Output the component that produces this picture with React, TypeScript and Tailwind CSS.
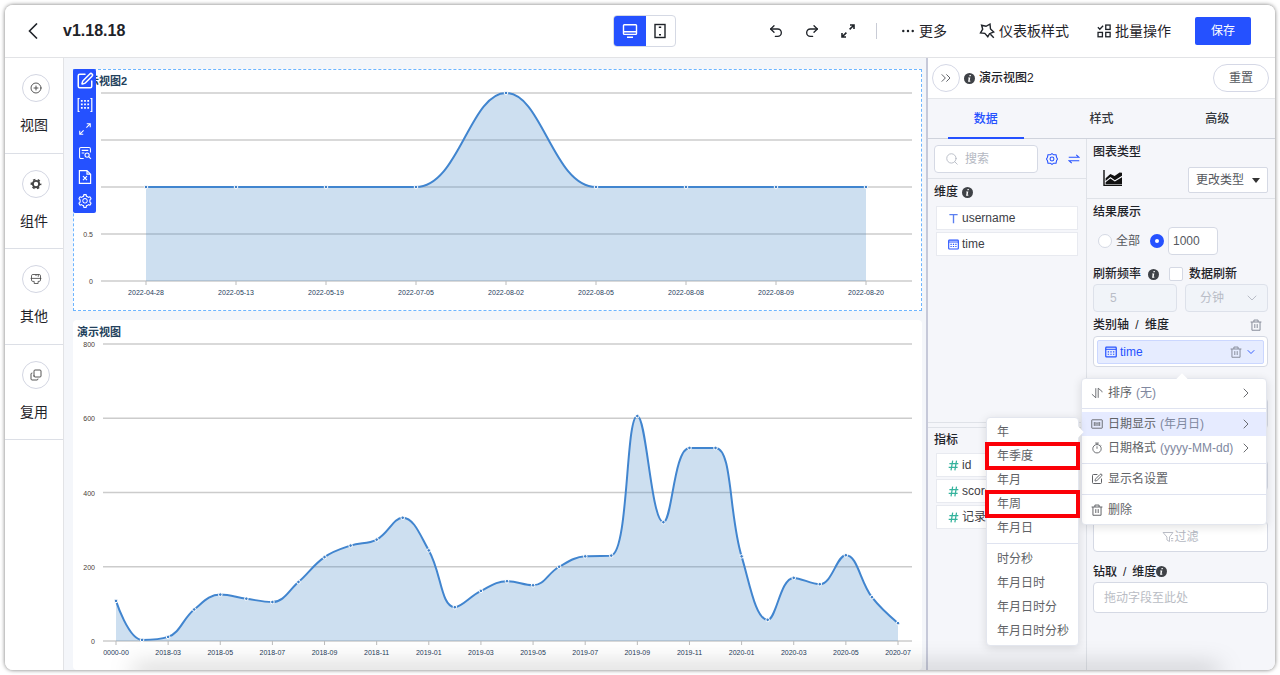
import { useState } from "react";
import type { ReactNode, SVGProps } from "react";
import {
  ChevronDown,
  ChevronRight,
  ChevronsRight,
  CirclePlus,
  Copy,
  Redo2,
  Search,
  SquarePen,
  Undo2,
} from "lucide-react";
import { AiOutlineSetting } from "react-icons/ai";
import clsx from "clsx";

type IconProps = SVGProps<SVGSVGElement>;

function Svg({ children, ...props }: IconProps) {
  return (
    <svg
      viewBox="0 0 16 16"
      fill="none"
      stroke="currentColor"
      strokeWidth="1.2"
      aria-hidden="true"
      {...props}
    >
      {children}
    </svg>
  );
}

const BackIcon = (p: IconProps) => (
  <Svg strokeWidth="1.6" {...p}>
    <path d="M12 0.5 4.5 8l7.5 7.5" />
  </Svg>
);

const DesktopIcon = (p: IconProps) => (
  <Svg strokeWidth="1.4" {...p}>
    <rect x="1.5" y="1.8" width="13" height="9.6" rx="0.8" />
    <path d="M1.5 8.8h13M5 14.2h6" />
  </Svg>
);

const PhoneIcon = (p: IconProps) => (
  <Svg strokeWidth="1.4" {...p}>
    <rect x="3" y="1.5" width="10" height="13" />
    <path d="M6.8 4.2h2.4M7 11.8h2" />
  </Svg>
);

const StyleIcon = (p: IconProps) => (
  <Svg strokeWidth="1.4" {...p}>
    <path d="M2.6 2.2 7 3.3 11 1.2l.5 4.8 3.2 3-4.2 1.7-1.7 3.1-3-3.4-4.3-.5 2.2-3.7z" />
    <path d="m11.4 11.2 3.4 3.6" />
  </Svg>
);

const BatchIcon = (p: IconProps) => (
  <Svg strokeWidth="1.5" {...p}>
    <path d="m1 3.8 2.2 2.2L7 2" />
    <rect x="10" y="1.2" width="5" height="5" />
    <rect x="1.2" y="9.6" width="5" height="5" />
    <rect x="10" y="9.6" width="5" height="5" />
  </Svg>
);

const ComponentIcon = (p: IconProps) => (
  <Svg {...p}>
    <circle cx="8" cy="8" r="4.2" strokeWidth="2.6" />
    <circle
      cx="8"
      cy="8"
      r="6.2"
      strokeWidth="2"
      strokeDasharray="3.2 3.293"
      strokeDashoffset="1.6"
    />
  </Svg>
);

const OtherIcon = (p: IconProps) => (
  <Svg strokeWidth="1.1" {...p}>
    <path d="M2 7.2V3.6C2 2.6 2.8 2 3.8 2h8.4c1 0 1.8.6 1.8 1.6v6c0 1-.8 1.6-1.8 1.6h-1.4V14H5.6v-2.8H3.8c-1 0-1.8-.6-1.8-1.6z" />
    <path d="M.8 7.2h14.4M8 2v2M11 2v3" />
  </Svg>
);

const GridIcon = (p: IconProps) => (
  <Svg {...p}>
    <path d="M2.6 1.5H1.2v13h1.4M13.4 1.5h1.4v13h-1.4" />
    <path strokeWidth="1.8" strokeDasharray="1.8 1.7" d="M4.8 3v10M8 3v10M11.2 3v10" />
  </Svg>
);

const ArrowsIcon = (p: IconProps) => (
  <Svg {...p}>
    <path d="M10 2h4v4M13.8 2.2 9.6 6.4M6 14H2v-4M2.2 13.8l4.2-4.2" />
  </Svg>
);

const DetailIcon = (p: IconProps) => (
  <Svg {...p}>
    <path d="M6.5 14.2H3.4c-1 0-1.6-.6-1.6-1.6V3.4c0-1 .6-1.6 1.6-1.6h9.2c1 0 1.6.6 1.6 1.6v4M4.2 5h7.6M4.2 8h3" />
    <circle cx="10.4" cy="10.4" r="2.4" />
    <path d="m12.2 12.2 2.6 2.6" />
  </Svg>
);

const FileCloseIcon = (p: IconProps) => (
  <Svg {...p}>
    <path d="M10 1.6H2.4v12.8h11.2V5.2zM10 1.6v3.6h3.6" />
    <path d="m6 7.2 4 4M10 7.2l-4 4" />
  </Svg>
);

const InfoIcon = (p: IconProps) => (
  <Svg stroke="none" {...p}>
    <circle cx="8" cy="8" r="8" fill="#3f4247" />
    <path d="M8.1 2.8h2l-.4 2h-2zM6.2 6.4h3l-1 5h1.2l-.3 1.4H5.9l.9-5H5.9z" fill="#fff" />
  </Svg>
);

const DateIcon = (p: IconProps) => (
  <Svg strokeWidth="1.6" {...p}>
    <rect x="1" y="1.6" width="14" height="13" rx="1" />
    <path d="M1 4.4h14" strokeWidth="1.4" />
    <path d="M3.6 7.8h8.8M3.6 11h8.8" strokeDasharray="1.8 1.7" />
  </Svg>
);

const TextIcon = (p: IconProps) => (
  <Svg strokeWidth="2" {...p}>
    <path d="M2 2.4h12M8 2.4v12.4" />
  </Svg>
);

const NumberIcon = (p: IconProps) => (
  <Svg strokeWidth="1.8" {...p}>
    <path d="M6.8 1 4.4 15M12.4 1 10 15M2 5.2h13M1 10.8h13" />
  </Svg>
);

const HexGearIcon = (p: IconProps) => (
  <Svg strokeWidth="1.4" {...p}>
    <path d="M8 .8l2.2 1.6h3.2l.6 3.2L15.4 8 14 10.4l-.6 3.2h-3.2L8 15.2l-2.2-1.6H2.6L2 10.4.6 8 2 5.6l.6-3.2h3.2z" />
    <circle cx="8" cy="8" r="2.6" />
  </Svg>
);

const SwapIcon = (p: IconProps) => (
  <Svg strokeWidth="1.5" {...p}>
    <path d="M1 5.6h13.4L11 2.4M15 10.4H1.6L5 13.6" />
  </Svg>
);

const AreaIcon = (p: IconProps) => (
  <Svg viewBox="0 0 20 18" stroke="none" {...p}>
    <path d="M1 1v15.4h18" fill="none" stroke="#111" strokeWidth="1.4" />
    <path d="M2.6 9.2 7.4 5l4.2 2 5-3.6 2.4.4v3l-7.2 4.4L7.4 8l-4.8 4z" fill="#111" />
    <path d="m2.6 13.2 4.8-3.8 4.4 3 7.2-4.2v7H2.6z" fill="#111" />
  </Svg>
);

const SortIcon = (p: IconProps) => (
  <Svg {...p}>
    <path d="M6.4 1.6v12.8L1.2 9.6M9.6 14.4V1.6L14.8 6v1" />
  </Svg>
);

const DateShowIcon = (p: IconProps) => (
  <Svg {...p}>
    <rect x="1" y="2.4" width="14" height="11.2" rx="0.6" />
    <path d="M4.4 5.4v5.2M6.6 5.4v5.2M9.4 5.4v5.2M11.6 5.4v5.2M8 7v.8M8 9v.8" />
  </Svg>
);

const TimerIcon = (p: IconProps) => (
  <Svg {...p}>
    <circle cx="8" cy="9" r="5.6" />
    <path d="M8 5.8V9M5.6 1.4h4.8M8 1.4v2M12.4 3.8l1 1" />
  </Svg>
);

const FilterIcon = (p: IconProps) => (
  <Svg {...p}>
    <path d="M1.4 2h13.2L10 8v6l-3.4-2V8zM12 10h3M12 13h3" />
  </Svg>
);

const TrashIcon = (p: IconProps) => (
  <Svg strokeWidth="1.3" {...p}>
    <path d="M.8 4h14.4M5.2 4V1.4h5.6V4M2.6 4v11h10.8V4M6.4 6.8v5.2M9.6 6.8v5.2" />
  </Svg>
);

interface Point {
  x: number;
  y: number;
}

const clamp = (v: number, a: number, b: number) =>
  Math.max(Math.min(a, b), Math.min(v, Math.max(a, b)));

// Bezier smoothing that never lets a control point pass its neighbours
function smoothPath(pts: Point[], smooth = 0.4) {
  let d = `M${pts[0].x},${pts[0].y}`;
  let cp0 = pts[0];

  for (let i = 1; i < pts.length; i++) {
    const prev = pts[i - 1];
    const cur = pts[i];
    const next = pts[i + 1];
    let cp1 = cur;
    let nextCp = cur;

    if (next) {
      const lenPrev = Math.hypot(cur.x - prev.x, cur.y - prev.y);
      const lenNext = Math.hypot(next.x - cur.x, next.y - cur.y);
      const ratio = lenNext / (lenNext + lenPrev);
      const k = lenPrev / lenNext;
      nextCp = {
        x: clamp(cur.x + (next.x - prev.x) * smooth * ratio, cur.x, next.x),
        y: clamp(cur.y + (next.y - prev.y) * smooth * ratio, cur.y, next.y),
      };
      cp1 = {
        x: clamp(cur.x - (nextCp.x - cur.x) * k, prev.x, cur.x),
        y: clamp(cur.y - (nextCp.y - cur.y) * k, prev.y, cur.y),
      };
      nextCp = {
        x: cur.x + (cur.x - cp1.x) / k,
        y: cur.y + (cur.y - cp1.y) / k,
      };
    }
    d += `C${cp0.x},${cp0.y} ${cp1.x},${cp1.y} ${cur.x},${cur.y}`;
    cp0 = nextCp;
  }
  return d;
}

interface AreaChartProps {
  name: string;
  height: number;
  left: number;
  top: number;
  bottom: number;
  first: number;
  last: number;
  max: number;
  ticks: number[];
  labelled: number[];
  labels: string[];
  labelEvery: number;
  values: number[];
}

function AreaChart(props: AreaChartProps) {
  const { height, left, top, bottom, first, last, max, values } = props;
  const yOf = (v: number) => bottom - (v / max) * (bottom - top);
  const pts = values.map((v, i) => ({
    x: first + ((last - first) * i) / (values.length - 1),
    y: yOf(v),
  }));
  const line = smoothPath(pts);

  return (
    <svg
      viewBox={`0 0 849 ${height}`}
      className="block w-full"
      role="img"
      aria-label={props.name}
    >
      {props.ticks.map((t) => (
        <line key={t} x1={left} x2="839" y1={yOf(t)} y2={yOf(t)} stroke="#ccc" strokeWidth="1.3" />
      ))}
      {props.labelled.map((t) => (
        <text key={t} x={left - 8} y={yOf(t) + 3} textAnchor="end" fontSize="7" fill="#4a4238">
          {t}
        </text>
      ))}
      <path
        d={`${line}L${last},${bottom}L${first},${bottom}Z`}
        fill="#3d85c6"
        fillOpacity="0.26"
      />
      <path d={line} fill="none" stroke="#4185cf" strokeWidth="2" />
      {pts.map((p, i) => (
        <circle key={i} cx={p.x} cy={p.y} r="1.8" fill="#3f80c8" stroke="#fff" strokeWidth="1" />
      ))}
      {props.labels.map((label, i) => {
        const x = pts[i * props.labelEvery].x;
        return (
          <g key={label}>
            <line x1={x} x2={x} y1={bottom} y2={bottom + 4} stroke="#bbb" />
            <text x={x} y={bottom + 14} textAnchor="middle" fontSize="7" fill="#1f3d5a">
              {label}
            </text>
          </g>
        );
      })}
    </svg>
  );
}

const dayLabels = [
  "2022-04-28",
  "2022-05-13",
  "2022-05-19",
  "2022-07-05",
  "2022-08-02",
  "2022-08-05",
  "2022-08-08",
  "2022-08-09",
  "2022-08-20",
];

const monthLabels = [
  "0000-00",
  "2018-03",
  "2018-05",
  "2018-07",
  "2018-09",
  "2018-11",
  "2019-01",
  "2019-03",
  "2019-05",
  "2019-07",
  "2019-09",
  "2019-11",
  "2020-01",
  "2020-03",
  "2020-05",
  "2020-07",
];

const monthValues = [
  108, 3, 11, 85, 125, 114, 105, 159, 226, 257, 273, 332, 244, 91, 135, 161, 150, 200, 228, 230,
  606, 320, 520, 520, 228, 57, 170, 153, 231, 118, 48,
];

const sideItems = [
  { label: "视图", icon: CirclePlus, className: "size-3 stroke-[1.8]" },
  { label: "组件", icon: ComponentIcon, className: "size-3" },
  { label: "其他", icon: OtherIcon, className: "size-3" },
  { label: "复用", icon: Copy, className: "size-3 -rotate-90 stroke-[1.8]" },
];

const chartTools = [
  { label: "编辑", icon: SquarePen, className: "size-[18px]" },
  { label: "联动", icon: GridIcon, className: "size-4" },
  { label: "放大", icon: ArrowsIcon, className: "size-3.5" },
  { label: "详情", icon: DetailIcon, className: "size-3.5" },
  { label: "导出", icon: FileCloseIcon, className: "size-4" },
  { label: "设置", icon: AiOutlineSetting, className: "size-4" },
];

const dateOptions = [
  ["年", "年季度", "年月", "年周", "年月日"],
  ["时分秒", "年月日时", "年月日时分", "年月日时分秒"],
];

const marked = ["年季度", "年周"];

const heading = "text-xs font-medium text-[#1f2329]";
const dropBox = "flex h-[31px] items-center rounded border border-[#d5d9e4] bg-white";

function Header() {
  return (
    <header className="flex h-[53px] shrink-0 items-center border-b border-[#e2e3e6] bg-white pr-6 pl-5 text-[#1f2329]">
      <button type="button" aria-label="返回" className="mr-[22px]">
        <BackIcon className="size-4" />
      </button>
      <h1 className="text-base font-bold">v1.18.18</h1>

      <div className="mr-[92px] ml-auto flex h-8 w-[63px] overflow-hidden rounded border border-[#d5d9e4]">
        <button
          type="button"
          aria-label="桌面端"
          className="-m-px flex flex-1 items-center justify-center bg-[#2551ff] text-white"
        >
          <DesktopIcon className="size-4" />
        </button>
        <button type="button" aria-label="移动端" className="flex w-[30px] items-center justify-center">
          <PhoneIcon className="size-4" />
        </button>
      </div>

      <div className="flex items-center gap-5">
        <button type="button" aria-label="撤销">
          <Undo2 className="size-4" />
        </button>
        <button type="button" aria-label="重做">
          <Redo2 className="size-4" />
        </button>
        <button type="button" aria-label="全屏">
          <ArrowsIcon className="size-4 stroke-[1.6]" />
        </button>
        <span className="h-4 w-px bg-[#c9ccd6]" />
      </div>

      <div className="ml-6 flex items-center gap-8 text-sm">
        <button type="button" className="flex items-center gap-1">
          <Svg className="size-3.5" fill="currentColor" stroke="none">
            <circle cx="2.6" cy="8" r="1.4" />
            <circle cx="8" cy="8" r="1.4" />
            <circle cx="13.4" cy="8" r="1.4" />
          </Svg>
          更多
        </button>
        <button type="button" className="flex items-center gap-1">
          <StyleIcon className="size-4" />
          仪表板样式
        </button>
        <button type="button" className="-ml-1 flex items-center gap-1">
          <BatchIcon className="size-3.5" />
          批量操作
        </button>
      </div>
      <button type="button" className="ml-6 h-7 w-14 rounded-xs bg-[#2551ff] text-xs text-white">
        保存
      </button>
    </header>
  );
}

function SideNav() {
  return (
    <nav className="w-[59px] shrink-0 border-r border-[#e2e3e6] bg-white">
      <ul className="grid h-[382px] grid-rows-4">
        {sideItems.map(({ label, icon: Icon, className }) => (
          <li key={label} className="border-b border-[#dcdfe6]">
            <button
              type="button"
              className="flex h-full w-full flex-col items-center gap-[13px] pt-4 pl-1 text-sm text-[#1f2329]"
            >
              <span className="flex size-7 items-center justify-center rounded-full border border-[#d3d6e2] text-[#444]">
                <Icon className={className} />
              </span>
              <span className="-ml-1">{label}</span>
            </button>
          </li>
        ))}
      </ul>
    </nav>
  );
}

function Canvas() {
  return (
    <main className="min-w-0 flex-1 overflow-hidden bg-[#f4f6fa] pt-[11px] pr-1 pl-[9px]">
      <section className="relative bg-white outline-1 -outline-offset-1 outline-[#6db5ff] outline-dashed">
        <h2 className="absolute top-1 left-1 text-[11px] leading-4 font-bold text-[#23415c]">
          演示视图2
        </h2>
        <AreaChart
          name="演示视图2"
          height={242}
          left={28}
          top={24}
          bottom={212}
          first={73}
          last={793}
          max={2}
          ticks={[0, 0.5, 1, 1.5, 2]}
          labelled={[0, 0.5]}
          labels={dayLabels}
          labelEvery={1}
          values={[1, 1, 1, 1, 2, 1, 1, 1, 1]}
        />
        <div className="absolute top-0 left-0 flex w-[23px] flex-col rounded-xs bg-[#2551ff] text-white">
          {chartTools.map(({ label, icon: Icon, className }) => (
            <button
              key={label}
              type="button"
              aria-label={label}
              className="flex h-6 items-center justify-center"
            >
              <Icon className={className} />
            </button>
          ))}
        </div>
      </section>

      <section className="relative mt-[9px] rounded bg-white">
        <h2 className="absolute top-1 left-1 text-[11px] leading-4 font-bold text-[#23415c]">
          演示视图
        </h2>
        <AreaChart
          name="演示视图"
          height={350}
          left={30}
          top={24}
          bottom={321}
          first={43}
          last={825}
          max={800}
          ticks={[0, 200, 400, 600, 800]}
          labelled={[0, 200, 400, 600, 800]}
          labels={monthLabels}
          labelEvery={2}
          values={monthValues}
        />
      </section>
    </main>
  );
}

function Field({ icon, name }: { icon: ReactNode; name: string }) {
  return (
    <li className="flex h-6 items-center gap-[3px] border border-[#e8eaf0] bg-white pl-[11px] text-xs text-[#3d4046]">
      {icon}
      {name}
    </li>
  );
}

function FieldColumn() {
  return (
    <div className="flex w-[159px] shrink-0 flex-col border-r border-[#dfe2e8]">
      <div className="flex h-10 shrink-0 items-center border-b border-[#dfe2e8] pl-1.5">
        <label className="flex h-7 w-[104px] items-center gap-1.5 rounded border border-[#d5d9e4] bg-white pl-2.5">
          <Search className="size-3.5 shrink-0 stroke-[1.5] text-[#b4b8c2]" />
          <input
            type="text"
            aria-label="搜索"
            placeholder="搜索"
            className="w-full min-w-0 text-xs outline-none placeholder:text-[#b4b8c2]"
          />
        </label>
        <button type="button" aria-label="字段设置" className="ml-2 text-[#2551ff]">
          <HexGearIcon className="size-3" />
        </button>
        <button type="button" aria-label="切换" className="ml-2.5 text-[#2551ff]">
          <SwapIcon className="size-3" />
        </button>
      </div>

      <div className="flex-1 border-b border-[#dfe2e8] pt-1">
        <h3 className={clsx(heading, "flex h-[18px] items-center gap-1 pl-1.5")}>
          维度 <InfoIcon className="size-[11px]" />
        </h3>
        <ul className="mt-[5px] mr-2 ml-2 grid gap-0.5">
          <Field icon={<TextIcon className="size-[11px] text-[#5b7ff0]" />} name="username" />
          <Field icon={<DateIcon className="size-[11px] text-[#2551ff]" />} name="time" />
        </ul>
      </div>

      <div className="mt-1 flex-1 border-t border-[#dfe2e8] pt-[3px]">
        <h3 className={clsx(heading, "flex h-[18px] items-center pl-1.5")}>指标</h3>
        <ul className="mt-1 mr-2 ml-2 grid gap-0.5">
          <Field icon={<NumberIcon className="size-[11px] text-[#35b39d]" />} name="id" />
          <Field icon={<NumberIcon className="size-[11px] text-[#35b39d]" />} name="score" />
          <Field icon={<NumberIcon className="size-[11px] text-[#35b39d]" />} name="记录数*" />
        </ul>
      </div>
    </div>
  );
}

function DateMenu() {
  return (
    <div className="absolute top-[5px] right-full z-20 mr-[3px] w-[93px] rounded border border-[#e3e6ee] bg-white py-0.5 shadow-[0_2px_10px_rgba(0,0,0,0.12)]">
      <span className="absolute top-2.5 -right-1 size-2 rotate-45 bg-white" />
      {dateOptions.map((group, i) => (
        <ul key={i} className={clsx(i > 0 && "mt-[3px] border-t border-[#dfe3f0] pt-[3px]")}>
          {group.map((name) => (
            <li key={name} className="relative">
              <button type="button" className="block h-6 w-full pl-2.5 text-left text-[#606266]">
                {name}
              </button>
              {marked.includes(name) && (
                <span className="pointer-events-none absolute -inset-0.5 border-4 border-[#fb0007]" />
              )}
            </li>
          ))}
        </ul>
      ))}
    </div>
  );
}

interface MenuItemProps {
  icon: ReactNode;
  label: string;
  value?: string;
  active?: boolean;
  children?: ReactNode;
}

function MenuItem({ icon, label, value, active, children }: MenuItemProps) {
  return (
    <li className={clsx("relative", active && "bg-[#e6ebff]")}>
      <button
        type="button"
        className="flex h-6 w-full items-center gap-1 pr-3 pl-[9px] whitespace-nowrap"
      >
        {icon}
        <span className="ml-px">{label}</span>
        {value && <span className="text-[#8088a0]">({value})</span>}
        {value && <ChevronRight className="ml-auto size-4 shrink-0 stroke-[1.4]" />}
      </button>
      {children}
    </li>
  );
}

function FieldMenu() {
  return (
    <div className="absolute top-[41px] right-0 z-10 w-[186px] rounded border border-[#e3e6ee] bg-white py-0.5 text-xs text-[#606266] shadow-[0_2px_10px_rgba(0,0,0,0.12)]">
      <span className="absolute -top-1 left-24 size-2 rotate-45 bg-white" />
      <ul>
        <MenuItem icon={<SortIcon className="size-3 shrink-0" />} label="排序" value="无" />
      </ul>
      <ul className="mt-[3px] border-t border-[#dfe3f0] pt-[3px]">
        <MenuItem
          icon={<DateShowIcon className="size-3 shrink-0" />}
          label="日期显示"
          value="年月日"
          active
        >
          <DateMenu />
        </MenuItem>
        <MenuItem
          icon={<TimerIcon className="size-3 shrink-0" />}
          label="日期格式"
          value="yyyy-MM-dd"
        />
      </ul>
      <ul className="mt-[3px] border-t border-[#dfe3f0] pt-[3px]">
        <MenuItem icon={<SquarePen className="size-3 shrink-0" />} label="显示名设置" />
      </ul>
      <ul className="mt-[3px] border-t border-[#dfe3f0] pt-[3px]">
        <MenuItem icon={<TrashIcon className="size-3 shrink-0" />} label="删除" />
      </ul>
    </div>
  );
}

function SettingsColumn() {
  const [showAll, setShowAll] = useState(false);

  return (
    <div className="min-w-0 flex-1">
      <div className="flex h-[60px] justify-between border-b border-[#dfe2e8] pr-[7px] pl-1.5">
        <div>
          <h3 className={clsx(heading, "mt-1 h-[18px] leading-[18px]")}>图表类型</h3>
          <AreaIcon className="mt-2 ml-2.5 h-[18px] w-5" />
        </div>
        <div className="relative mt-7 h-[26px] w-20">
          <select
            aria-label="更改类型"
            className="h-full w-full appearance-none rounded-xs border border-[#d5d9e4] bg-white pl-[7px] text-xs text-[#55585e]"
          >
            <option>更改类型</option>
          </select>
          <span className="pointer-events-none absolute top-[11px] right-2 border-x-4 border-t-5 border-x-transparent border-t-[#333]" />
        </div>
      </div>

      <div className="pr-[7px] pl-1.5 text-xs text-[#55585e]">
        <h3 className={clsx(heading, "mt-1 h-[18px] leading-[18px]")}>结果展示</h3>
        <div className="mt-1.5 flex h-7 items-center pl-[5px]">
          <label className="flex items-center gap-1">
            <input
              type="radio"
              name="limit"
              checked={showAll}
              onChange={() => setShowAll(true)}
              className="size-3.5 appearance-none rounded-full border border-[#d5d9e4] bg-white checked:border-5 checked:border-[#2551ff]"
            />
            全部
          </label>
          <input
            type="radio"
            name="limit"
            aria-label="限制条数"
            checked={!showAll}
            onChange={() => setShowAll(false)}
            className="ml-2.5 size-3.5 appearance-none rounded-full border border-[#d5d9e4] bg-white checked:border-5 checked:border-[#2551ff]"
          />
          <input
            type="text"
            aria-label="条数"
            defaultValue="1000"
            className="ml-1 h-7 w-[50px] rounded border border-[#d5d9e4] bg-white pl-1 text-xs"
          />
        </div>

        <div className={clsx(heading, "mt-2.5 flex h-[18px] items-center")}>
          刷新频率
          <InfoIcon className="ml-[7px] size-[11px]" />
          <label className="ml-2.5 flex items-center gap-1.5">
            <input
              type="checkbox"
              className="size-3.5 appearance-none rounded-xs border border-[#d5d9e4] bg-white checked:bg-[#2551ff]"
            />
            数据刷新
          </label>
        </div>
        <div className="mt-px flex h-7 gap-2 text-[#b9bdc7]">
          <input
            type="text"
            aria-label="刷新频率"
            defaultValue="5"
            disabled
            className="w-[84px] rounded border border-[#dde1ea] bg-[#f1f4f9] pl-4"
          />
          <div className="relative flex-1">
            <select
              aria-label="时间单位"
              disabled
              className="h-full w-full appearance-none rounded border border-[#dde1ea] bg-[#f1f4f9] pl-3.5 opacity-100"
            >
              <option>分钟</option>
            </select>
            <ChevronDown className="pointer-events-none absolute top-1.5 right-2 size-4 stroke-[1.5]" />
          </div>
        </div>

        <div className="mt-0.5 grid gap-[9px]">
          <section>
            <div className="flex h-[22px] items-center justify-between pr-1.5">
              <h3 className={heading}>
                类别轴 <span className="mx-[3px]">/</span> 维度
              </h3>
              <button type="button" aria-label="清空" className="text-[#868b98]">
                <TrashIcon className="size-3" />
              </button>
            </div>
            <div className={clsx(dropBox, "relative px-[3px]")}>
              <button
                type="button"
                className="flex h-6 w-full items-center gap-[3px] rounded-xs border border-[#cbd7ff] bg-[#e6ecff] pr-1.5 pl-[7px] text-[#2551ff]"
              >
                <DateIcon className="size-3" />
                time
                <TrashIcon className="ml-auto size-3 text-[#868b98]" />
                <ChevronDown className="size-3 stroke-[1.8]" />
              </button>
              <FieldMenu />
            </div>
          </section>
          <div className={clsx(dropBox, "mt-[22px]")} />
          <div className={clsx(dropBox, "mt-[22px]")} />
          <div className={clsx(dropBox, "mt-[21px] justify-center text-[#b4b8c2]")}>
            <FilterIcon className="size-3" />
            过滤
          </div>
          <section>
            <h3 className={clsx(heading, "flex h-[21px] items-center")}>
              钻取 <span className="mx-1.5">/</span> 维度
              <InfoIcon className="size-[11px]" />
            </h3>
            <div className={clsx(dropBox, "pl-2.5 text-[#b9bcc4]")}>拖动字段至此处</div>
          </section>
        </div>
      </div>
    </div>
  );
}

function ConfigPanel() {
  const [tab, setTab] = useState("数据");

  return (
    <aside className="flex w-[349px] shrink-0 flex-col border-l-2 border-[#c6c9d9] bg-[#f5f6fa]">
      <div className="flex h-[41px] shrink-0 items-center border-b border-[#e4e6ea] bg-white pr-1.5 pl-1">
        <button
          type="button"
          aria-label="收起"
          className="flex size-7 items-center justify-center rounded-full border border-[#d5d8e6] text-[#55585e]"
        >
          <ChevronsRight className="size-4 stroke-[1.4]" />
        </button>
        <InfoIcon className="mr-1 ml-1 size-[11px]" />
        <h2 className="text-xs font-medium text-[#1f2329]">演示视图2</h2>
        <button
          type="button"
          className="ml-auto h-7 w-14 rounded-full border border-[#d5d8e6] bg-white text-xs text-[#55585e]"
        >
          重置
        </button>
      </div>

      <div role="tablist" className="flex h-10 shrink-0 border-b border-[#cfd3dc] text-xs">
        {["数据", "样式", "高级"].map((name) => (
          <button
            key={name}
            type="button"
            role="tab"
            aria-selected={tab === name}
            onClick={() => setTab(name)}
            className={clsx(
              "-mb-px flex-1 px-5 font-medium",
              tab === name ? "text-[#2551ff]" : "text-[#33363c]"
            )}
          >
            <span
              className={clsx(
                "flex h-full items-center justify-center border-b-2 pt-0.5",
                tab === name ? "border-[#2551ff]" : "border-transparent"
              )}
            >
              {name}
            </span>
          </button>
        ))}
      </div>

      <div className="flex flex-1">
        <FieldColumn />
        <SettingsColumn />
      </div>
    </aside>
  );
}

export default function App() {
  return (
    <div className="h-screen bg-white p-[5px] font-['Liberation_Sans','Noto_Sans_CJK_SC',sans-serif]">
      <div className="relative flex h-full flex-col overflow-hidden rounded-lg shadow-[0_0_4px_rgba(0,0,0,0.55)]">
        <Header />
        <div className="flex min-h-0 flex-1">
          <SideNav />
          <Canvas />
          <ConfigPanel />
        </div>
        <div className="pointer-events-none absolute top-full right-14 left-32 h-2 shadow-[0_-2px_24px_rgba(0,0,0,0.35)]" />
      </div>
    </div>
  );
}
